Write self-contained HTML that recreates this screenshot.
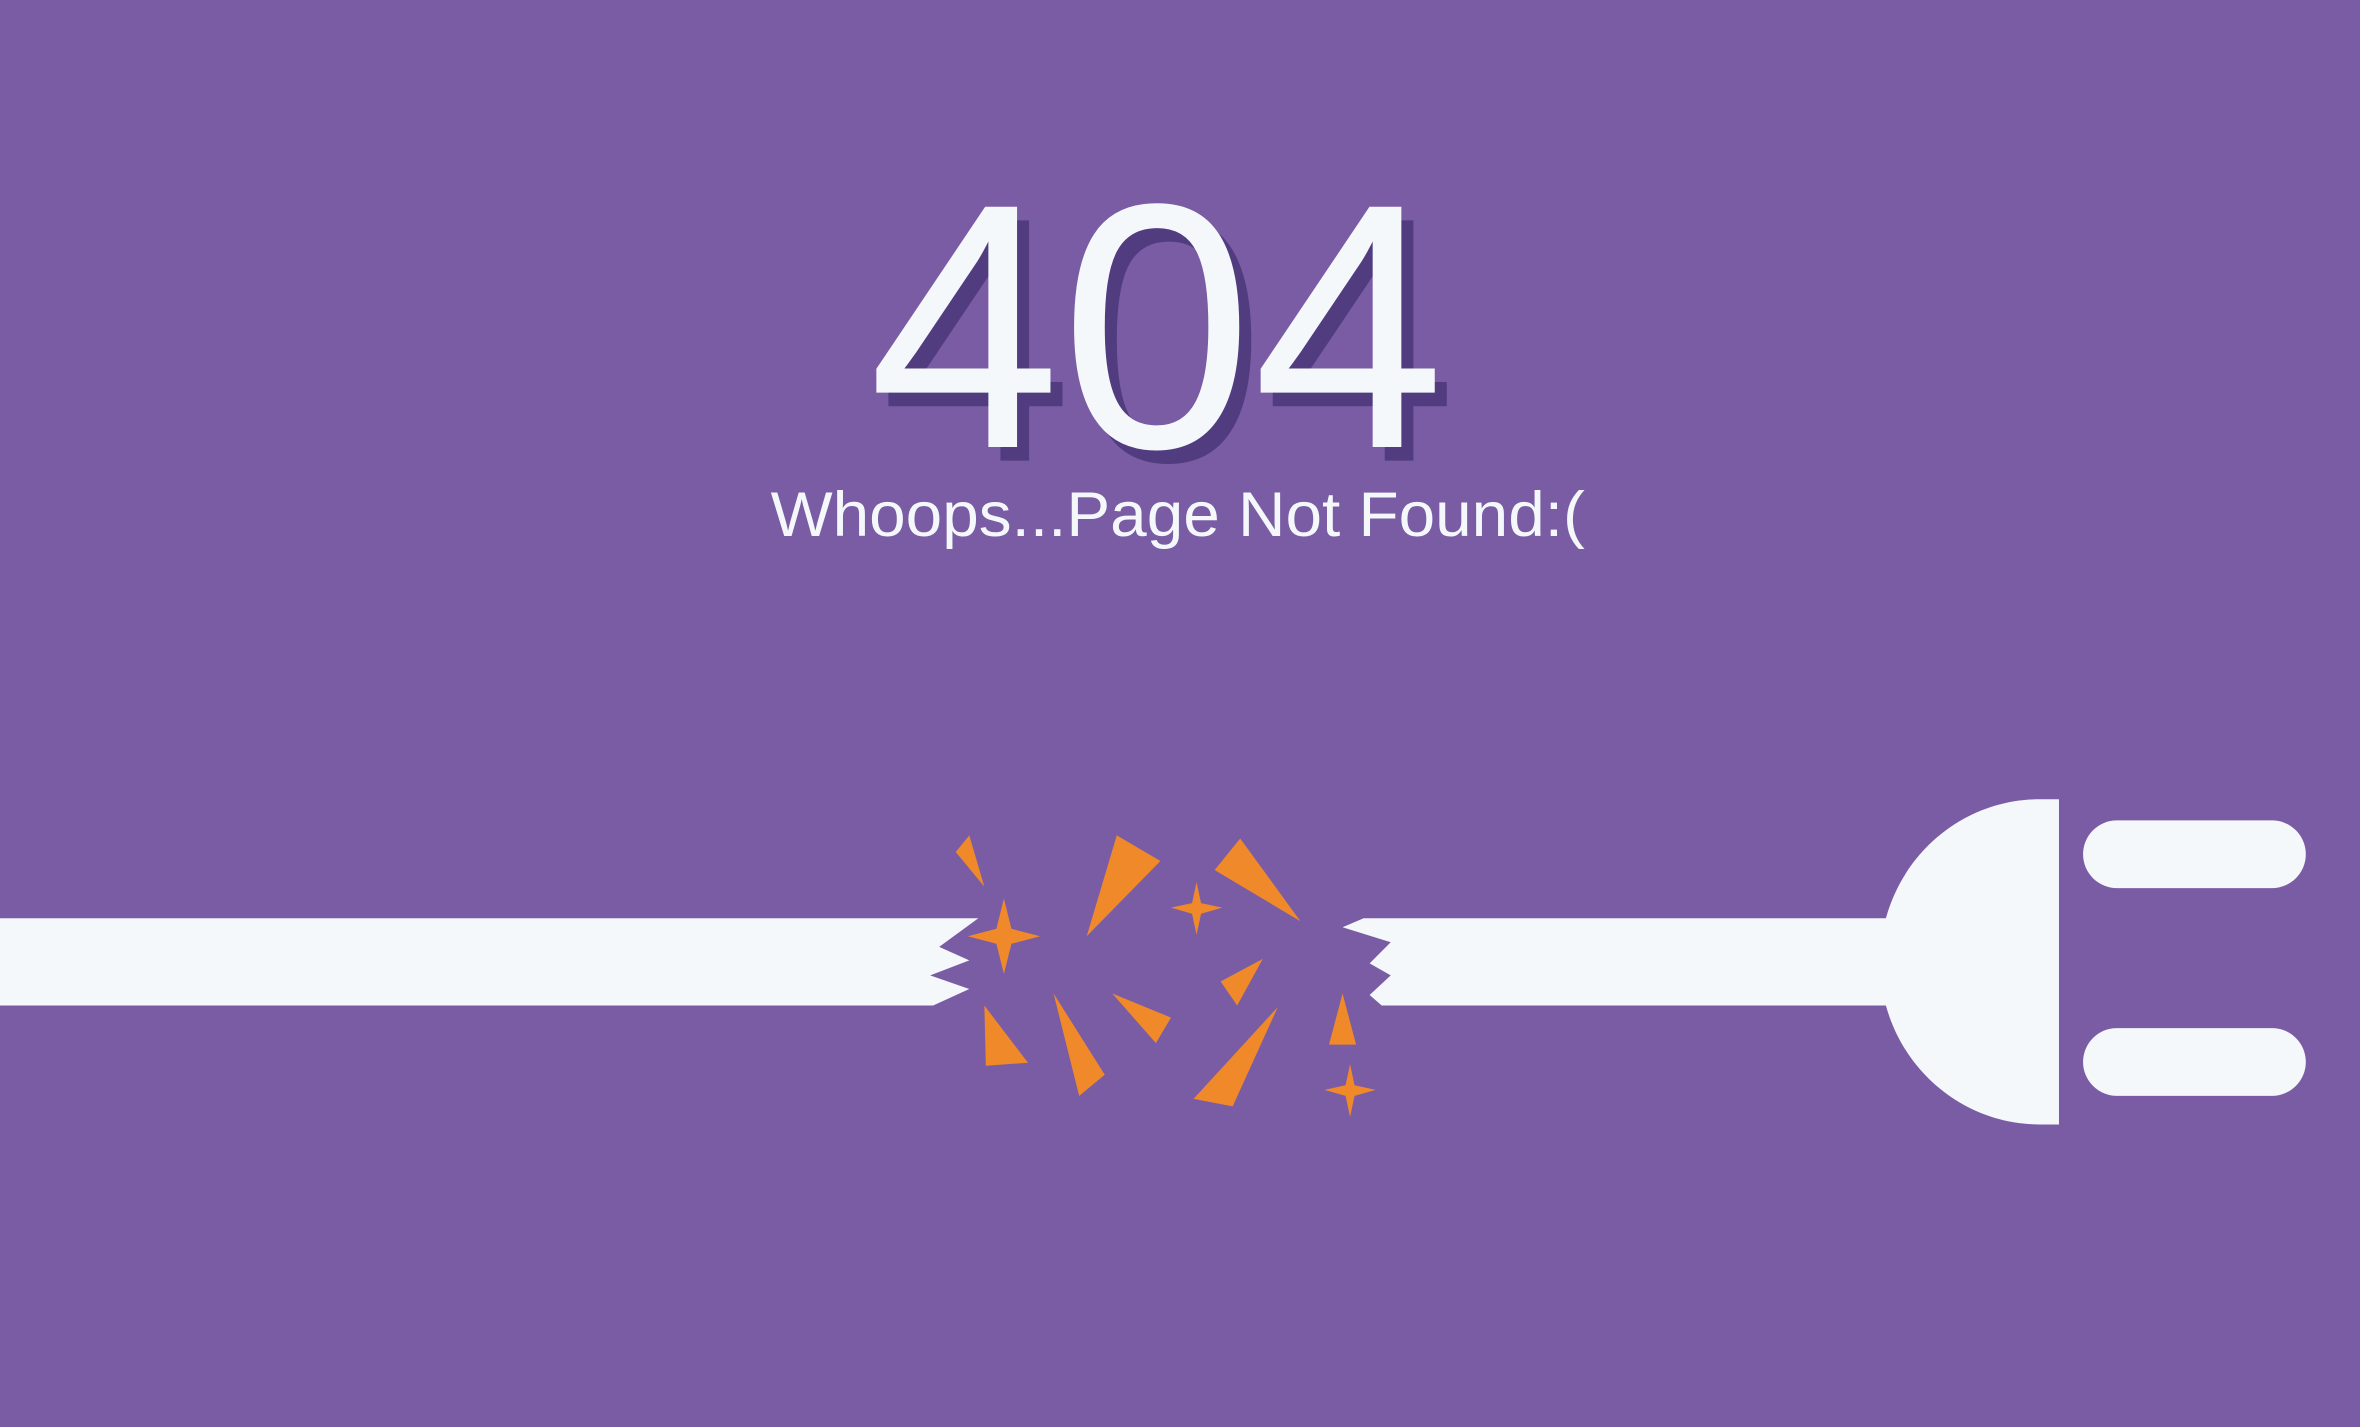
<!DOCTYPE html>
<html><head><meta charset="utf-8"><style>html,body{margin:0;padding:0;background:#7a5ca5;overflow:hidden}svg{display:block}</style></head>
<body>
<svg width="2360" height="1427" viewBox="0 0 1568 948" preserveAspectRatio="none" xmlns="http://www.w3.org/2000/svg">
<rect width="1568" height="948" fill="#7a5ca5"/>
<g font-family="Liberation Sans, DejaVu Sans, sans-serif">
<text x="585" y="306" font-size="232" fill="#523c80" textLength="383" lengthAdjust="spacingAndGlyphs">404</text>
<text x="577" y="297" font-size="232" fill="#f4f8fb" textLength="383" lengthAdjust="spacingAndGlyphs">404</text>
<text x="512" y="356" font-size="42" fill="#f4f8fb" textLength="541" lengthAdjust="spacingAndGlyphs">Whoops...Page Not Found:(</text>
</g>
<g fill="#f4f8fb">
<polygon points="0,610 650,610 624,629 644,638 618,648 644,657 620,668 0,668"/>
<path d="M892,616 L906,610 L1253,610 C1266,563 1308,531 1355,531 L1368,531 L1368,747 L1355,747 C1308,747 1266,715 1253,668 L918,668 L910,661 L924,648 L910,640 L924,626 Z"/>
<rect x="1384" y="545" width="148" height="45" rx="22.5"/>
<rect x="1384" y="683" width="148" height="45" rx="22.5"/>
</g>
<g fill="#f0892a">
<polygon points="644,555 654,589 635,566"/>
<polygon points="742,555 771,572 722,622"/>
<polygon points="824,557 864,612 807,578"/>
<polygon points="667,597 672,617 691,622 672,627 667,647 662,627 643,622 662,617"/>
<polygon points="795,586 798,600 812,603 798,607 795,621 792,607 778,603 792,600"/>
<polygon points="811,652 839,637 822,668"/>
<polygon points="654,668 683,706 655,708"/>
<polygon points="700,660 734,714 717,728"/>
<polygon points="739,660 778,676 768,693"/>
<polygon points="849,669 819,735 793,730"/>
<polygon points="892,660 901,694 883,694"/>
<polygon points="897,707 900,721 914,724 900,728 897,742 894,728 880,724 894,721"/>
</g>
</svg>
</body></html>
